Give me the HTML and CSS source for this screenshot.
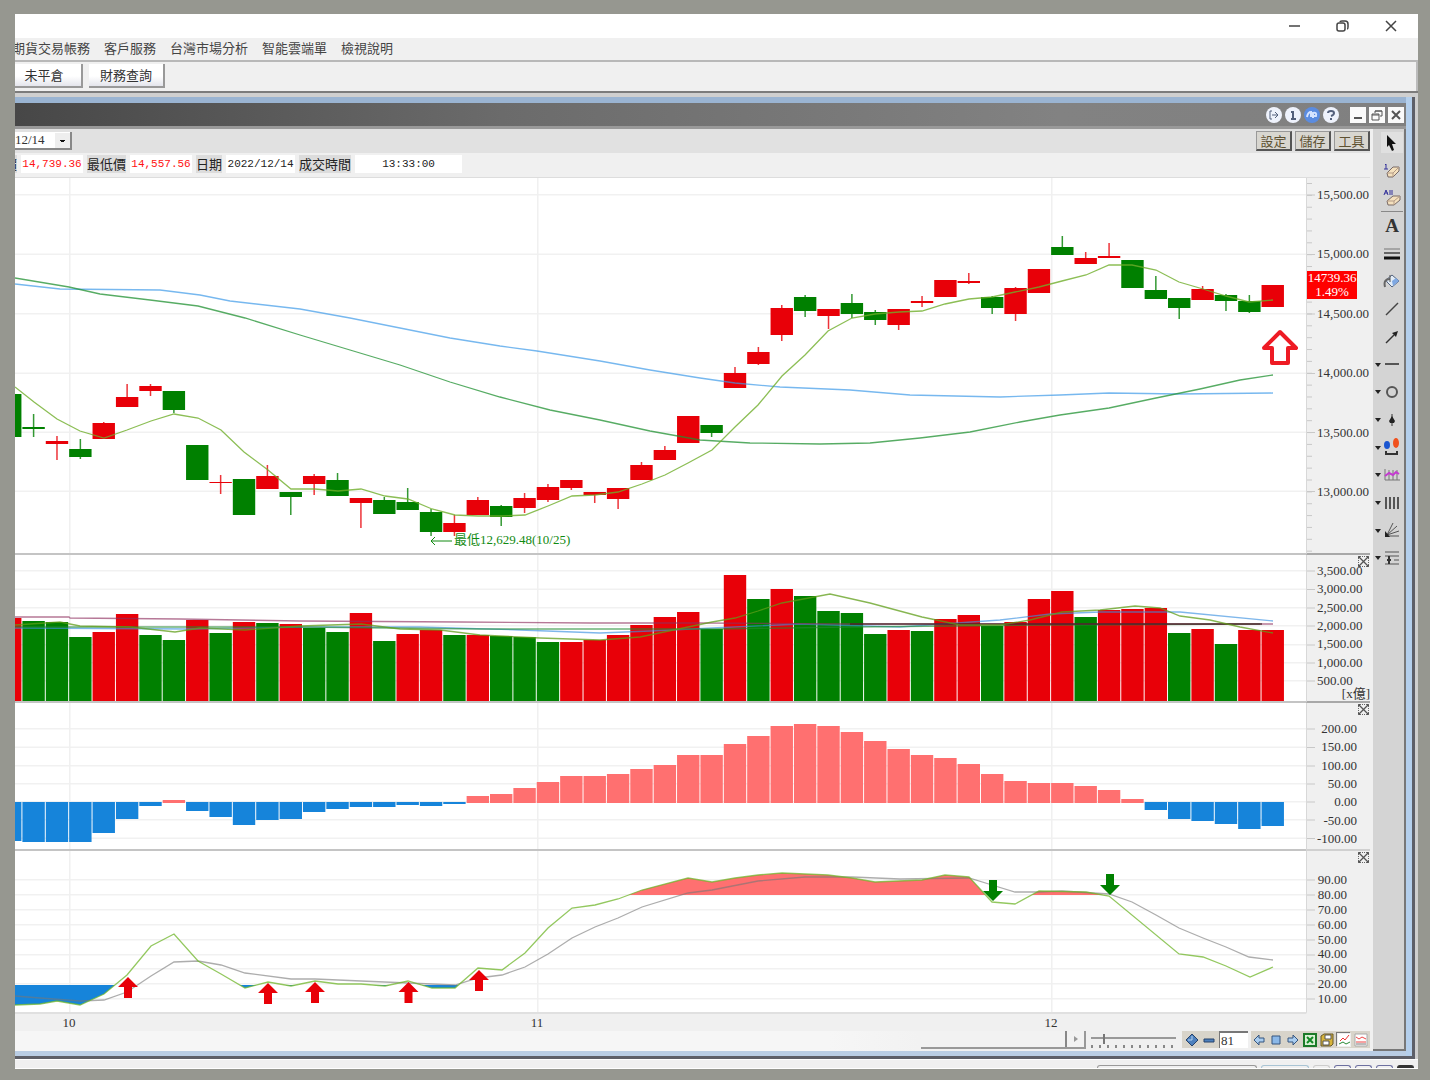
FILE: index.html
```html
<!DOCTYPE html>
<html lang="zh-Hant">
<head>
<meta charset="utf-8">
<title>技術分析</title>
<link rel="stylesheet" href="styles.css">
</head>
<body>
<main class="app">
  <header class="app-title">
    <button class="win-btn" aria-label="最小化"><svg width="14" height="14" viewBox="0 0 14 14"><path d="M1 7h11"/></svg></button>
    <button class="win-btn" aria-label="還原"><svg width="14" height="14" viewBox="0 0 14 14"><rect x="1" y="4" width="8" height="8" rx="2"/><path d="M4 3q0-1 2-1h3q3 0 3 3v3q0 2-1 2"/></svg></button>
    <button class="win-btn" aria-label="關閉"><svg width="14" height="14" viewBox="0 0 14 14"><path d="M2 2l10 10M12 2L2 12"/></svg></button>
  </header>
  <nav class="menu">
    <a href="#">期貨交易帳務</a><a href="#">客戶服務</a><a href="#">台灣市場分析</a><a href="#">智能雲端單</a><a href="#">檢視說明</a>
  </nav>
  <div class="toolbar">
    <button class="tool-btn">未平倉</button>
    <button class="tool-btn">財務查詢</button>
  </div>

  <div class="mdi">
    <section class="child">
      <header class="child-title">
        <button class="round" aria-label="登出"><svg width="12" height="12" viewBox="0 0 12 12"><path d="M4 2H2v8h2M4 6h6M7 3l3 3-3 3"/></svg></button>
        <button class="round" aria-label="資訊"><svg width="12" height="12" viewBox="0 0 12 12"><path d="M4 3h2v7M4 10h5" stroke-width="2"/></svg></button>
        <button class="round round-blue" aria-label="同步"><svg width="12" height="12" viewBox="0 0 12 12"><path d="M1 8q1-5 4-5v5M7 9V4q4-1 3 3H7" stroke-width="2"/></svg></button>
        <button class="round" aria-label="說明"><svg width="12" height="12" viewBox="0 0 12 12"><path d="M3 4q0-2 3-2t3 2-3 3M6 9v2" stroke-width="2"/></svg></button>
        <div class="frame-btns">
          <button class="frame-btn" aria-label="最小化"><svg width="12" height="12" viewBox="0 0 12 12"><path d="M2 9h8"/></svg></button>
          <button class="frame-btn" aria-label="還原"><svg width="12" height="12" viewBox="0 0 12 12"><path d="M4 4V2h7v5H9M4 2h7M1 5h7v6H1zM1 6h7" stroke-width="1"/></svg></button>
          <button class="frame-btn" aria-label="關閉"><svg width="12" height="12" viewBox="0 0 12 12"><path d="M2 2l8 8M10 2l-8 8"/></svg></button>
        </div>
      </header>

      <div class="work">
        <div class="content">
          <div class="options">
            <label class="combo" aria-label="日期"><select><option>12/14</option></select></label>
            <div class="options-right">
              <button class="opt-btn">設定</button>
              <button class="opt-btn">儲存</button>
              <button class="opt-btn">工具</button>
            </div>
          </div>
          <div class="quote">
            <span class="q-label">最高價</span><span class="q-val q-red">14,739.36</span>
            <span class="q-label">最低價</span><span class="q-val q-red">14,557.56</span>
            <span class="q-label">日期</span><span class="q-val q-date">2022/12/14</span>
            <span class="q-label">成交時間</span><span class="q-val q-time">13:33:00</span>
          </div>

          <div class="panel panel-price">
            <div class="plot"><svg id="price" viewBox="15 178 1291 375" preserveAspectRatio="none"></svg><span class="low-note">最低12,629.48(10/25)</span></div>
            <div class="axis">
              <svg class="ticks" data-y="195,254.5,314,373.5,432.5,491.5" viewBox="0 178 64 375"></svg>
              <span>15,500.00</span><span>15,000.00</span><span>14,500.00</span><span>14,000.00</span><span>13,500.00</span><span>13,000.00</span>
              <div class="tag">14739.36<br>1.49%</div>
            </div>
          </div>
          <div class="panel panel-volume">
            <div class="plot"><svg id="volume" viewBox="15 555 1291 146" preserveAspectRatio="none"></svg></div>
            <div class="axis">
              <svg class="ticks" data-y="571,589.5,608,626,645,663,681" viewBox="0 555 64 146"></svg>
              <span>3,500.00</span><span>3,000.00</span><span>2,500.00</span><span>2,000.00</span><span>1,500.00</span><span>1,000.00</span><span>500.00</span>
              <button class="shut" aria-label="關閉成交量"></button><span class="unit">[x億]</span>
            </div>
          </div>
          <div class="panel panel-macd">
            <div class="plot"><svg id="macd" viewBox="15 703 1291 146" preserveAspectRatio="none"></svg></div>
            <div class="axis">
              <svg class="ticks" data-y="729,747.5,766,784,802,820,838.5" viewBox="0 703 64 146"></svg>
              <span>200.00</span><span>150.00</span><span>100.00</span><span>50.00</span><span>0.00</span><span>-50.00</span><span>-100.00</span>
              <button class="shut" aria-label="關閉 MACD"></button>
            </div>
          </div>
          <div class="panel panel-kd">
            <div class="plot"><svg id="kd" viewBox="15 851 1291 161" preserveAspectRatio="none"></svg></div>
            <div class="axis">
              <svg class="ticks" data-y="880,895,910,925,940,955,969,984,999" viewBox="0 851 64 161"></svg>
              <span>90.00</span><span>80.00</span><span>70.00</span><span>60.00</span><span>50.00</span><span>40.00</span><span>30.00</span><span>20.00</span><span>10.00</span>
              <button class="shut" aria-label="關閉 KD"></button>
            </div>
          </div>
          <div class="months" id="months"></div>

          <div class="bottom">
            <div class="scroll"><div class="scroll-thumb"></div><button class="scroll-next" aria-label="向右捲動"><svg width="8" height="10" viewBox="0 0 8 10"><path d="M2 2v6l4-3z" fill="#999"/></svg></button></div>
            <label class="zoomer" aria-label="縮放"><input type="range" min="0" max="100" value="14"></label>
            <div class="pager">
              <button class="ico" aria-label="放大"><svg width="14" height="14" viewBox="0 0 14 14"><path d="M7 1l6 6-6 6-6-6z" fill="#4d80bd" stroke="#27436b"/><path d="M7 3v4H3" fill="none" stroke="#b5d4f2"/></svg></button>
              <button class="ico" aria-label="縮小"><svg width="14" height="14" viewBox="0 0 14 14"><path d="M2 6h10v3H2z" fill="#4d80bd" stroke="#27436b"/></svg></button>
              <input class="count" value="81" aria-label="根數">
            </div>
            <div class="pager pager-wide">
              <button class="ico" aria-label="前一筆"><svg width="14" height="14" viewBox="0 0 14 14"><path d="M7 2v3h5v4H7v3L2 7z" fill="#a9cdf0" stroke="#34557f"/></svg></button>
              <button class="ico" aria-label="停止"><svg width="14" height="14" viewBox="0 0 14 14"><path d="M3 3h8v8H3z" fill="#8bb8e8" stroke="#34557f"/></svg></button>
              <button class="ico" aria-label="後一筆"><svg width="14" height="14" viewBox="0 0 14 14"><path d="M7 2v3H2v4h5v3l5-5z" fill="#a9cdf0" stroke="#34557f"/></svg></button>
              <button class="ico" aria-label="匯出"><svg width="14" height="14" viewBox="0 0 14 14"><path d="M1 1h12v12H1z" fill="#d9f0d4" stroke="#1b7a28" stroke-width="2"/><path d="M4 4l6 6M10 4l-6 6" stroke="#138a25" stroke-width="2"/></svg></button>
              <button class="ico" aria-label="儲存圖形"><svg width="14" height="14" viewBox="0 0 14 14"><path d="M1 3l3-2h9v10l-2 2H1z" fill="#d7b43a" stroke="#665828"/><path d="M5 2h6v4H5zM3 8h6v4H3z" fill="#fff" stroke="#555"/></svg></button>
              <button class="ico ico-on" aria-label="走勢圖"><svg width="14" height="14" viewBox="0 0 14 14"><path d="M1 1h12v12H1z" fill="#fff"/><path d="M3 8l3-3 2 2 4-5" fill="none" stroke="#e33"/><path d="M2 11l4-2 3 2 4-2" fill="none" stroke="#298a35"/></svg></button>
              <button class="ico" aria-label="疊圖"><svg width="14" height="14" viewBox="0 0 14 14"><path d="M1 1h12v12H1z" fill="#fff" stroke="#aaa"/><path d="M2 4l3 2 3-2 4 2M2 9h10" fill="none" stroke="#e44"/><path d="M2 11h10" stroke="#777"/></svg></button>
            </div>
          </div>
        </div>

        <aside class="tools">
          <button class="tool tool-on" aria-label="選取"><svg width="16" height="18" viewBox="0 0 16 18"><path d="M3 1l9 9H8l2 6-2 1-3-6-2 2z" fill="#111"/></svg></button>
          <button class="tool" aria-label="清除一個"><svg width="18" height="18" viewBox="0 0 18 18"><path d="M3 2v5M2 3l1-1M1 7h4" stroke="#33309a"/><path d="M4 11l6-6h6v4l-6 6H5z" fill="#f4e0bd" stroke="#786a66"/><path d="M4 11h6l6-6M10 11v4" fill="none" stroke="#b39a86"/></svg></button>
          <button class="tool tool-rule" aria-label="全部清除"><svg width="18" height="18" viewBox="0 0 18 18"><path d="M1 6l2-5 2 5M2 4h3M7 1v5M9 1v5" fill="none" stroke="#33309a"/><path d="M4 12l6-5h7v4l-6 5H5z" fill="#f4e0bd" stroke="#786a66"/><path d="M4 12h7l6-5M11 12v4" fill="none" stroke="#b39a86"/></svg></button>
          <button class="tool tool-text" aria-label="文字">A</button>
          <button class="tool" aria-label="線寬"><svg width="16" height="14" viewBox="0 0 16 14"><path d="M0 2h16" stroke="#777"/><path d="M0 6h16" stroke="#666" stroke-width="2"/><path d="M0 11h16" stroke="#111" stroke-width="3"/></svg></button>
          <button class="tool" aria-label="填色"><svg width="18" height="16" viewBox="0 0 18 16"><path d="M3 7l6-5 7 6-7 6-5-5z" fill="#e1ecf7" stroke="#53637e"/><path d="M2 14q-2-8 5-8" fill="none" stroke="#666" stroke-width="2"/><path d="M9 8l4-3 3 3-6 5z" fill="#7fa8e2"/><path d="M7 2v7" stroke="#555"/></svg></button>
          <button class="tool" aria-label="直線"><svg width="14" height="14" viewBox="0 0 14 14"><path d="M1 13L13 1" stroke="#444" stroke-width="1.4"/></svg></button>
          <button class="tool" aria-label="箭頭"><svg width="14" height="14" viewBox="0 0 14 14"><path d="M1 13l8-8" stroke="#333" stroke-width="1.4"/><path d="M13 1l-2 6-4-4z" fill="#222"/></svg></button>
          <button class="tool more" aria-label="水平線"><svg width="16" height="14" viewBox="0 0 16 14"><path d="M1 7h14" stroke="#555" stroke-width="2"/></svg></button>
          <button class="tool more" aria-label="圓形"><svg width="14" height="14" viewBox="0 0 14 14"><circle cx="7" cy="7" r="5" fill="none" stroke="#555" stroke-width="2"/></svg></button>
          <button class="tool more" aria-label="標記"><svg width="14" height="14" viewBox="0 0 14 14"><path d="M7 1v12" stroke="#333"/><path d="M4 8l3-5 3 5-1 2H5z" fill="#222"/></svg></button>
          <button class="tool more" aria-label="多空"><svg width="16" height="18" viewBox="0 0 16 18"><ellipse cx="3" cy="7" rx="3" ry="4" fill="#1a55d0"/><ellipse cx="12" cy="5" rx="3" ry="5" fill="#f0501c"/><path d="M2 13v3h11v-3" fill="none" stroke="#333" stroke-width="2"/></svg></button>
          <button class="tool more" aria-label="指標"><svg width="16" height="14" viewBox="0 0 16 14"><path d="M1 1v11h15M5 2v10M9 2v10M13 2v10" fill="none" stroke="#777"/><path d="M1 8l4-3 4 2 3-3 3 2" fill="none" stroke="#c43bd0" stroke-width="2"/></svg></button>
          <button class="tool more" aria-label="週期線"><svg width="14" height="14" viewBox="0 0 14 14"><path d="M1 1v12M5 1v12M9 1v12M13 1v12" stroke="#555" stroke-width="2"/></svg></button>
          <button class="tool more" aria-label="扇形線"><svg width="16" height="16" viewBox="0 0 16 16"><path d="M1 14h14M3 13L15 9M3 13L13 4M3 13L9 1" stroke="#555"/><path d="M1 15V9l5 6z" fill="#222"/></svg></button>
          <button class="tool more" aria-label="黃金分割"><svg width="16" height="16" viewBox="0 0 16 16"><path d="M1 2h14M1 6h14M10 10h5M1 14h14" stroke="#555"/><path d="M5 6v8M3 10h4" stroke="#333" stroke-width="2"/></svg></button>
        </aside>
      </div>
    </section>
  </div>
  <footer class="status"><i class="st-wide"></i><i class="st-blue"></i><i class="st-pale"></i><i></i><i></i><i></i><i class="st-dark"></i></footer>
</main>
<script src="charts.js"></script>
</body>
</html>
```

FILE: styles.css
```css
* { box-sizing: border-box; }
body {
  margin: 0;
  min-height: 100vh;
  padding: 14px 12px 11px 15px;
  background: #969790;
  display: flex;
  flex-direction: column;
  font: 13px/14px "Liberation Serif", "Noto Sans CJK TC", serif;
  color: #333;
}
button { font: inherit; color: inherit; margin: 0; padding: 0; border: 0; background: none; }
svg { display: block; fill: none; }

.app { flex: 1; display: flex; flex-direction: column; background: #f0f0f0; overflow: hidden; }
.app-title { height: 24px; background: #fff; display: flex; justify-content: flex-end; padding-right: 3px; }
.win-btn { width: 48px; display: grid; place-items: center; }
.win-btn svg { stroke: #444; stroke-width: 1.5; }
.menu { height: 22px; padding-bottom: 2px; display: flex; align-items: center; gap: 14px; margin-left: -3px; font-family: "Noto Sans CJK TC", sans-serif; }
.menu a { color: #444; text-decoration: none; white-space: nowrap; }
.toolbar { height: 31px; border-top: 2px solid #b8b8b8; border-right: 2px solid #bbb; padding: 2px 0 3px; margin-left: -8px; display: flex; gap: 6px; }
.tool-btn { width: 76px; background: linear-gradient(#fff 55%, #e4e5ec); border-right: 2px solid #999; border-bottom: 2px solid #999; font-family: "Noto Sans CJK TC", sans-serif; }

.mdi { border-top: 2px solid #7c7c7c; background: #cfcfcf; padding: 4px 3px 0 0; }
.child { border-right: 3px solid #5d5f68; border-bottom: 3px solid #5d5f68; background: #b4cfec; padding-right: 6px; }
.child-title { height: 32px; border-top: 6px solid #9ab4d2; border-bottom: 3px solid #999; background: linear-gradient(90deg, #474747, #6b6b6b 35%, #828282 75%, #808080); display: flex; align-items: center; justify-content: flex-end; gap: 3px; padding-right: 2px; }
.round { width: 16px; height: 16px; border-radius: 50%; background: #eef2fc; display: grid; place-items: center; }
.round svg { stroke: #53607c; }
.round-blue { background: #5b8ce0; }
.round-blue svg { stroke: #d6e4ff; }
.frame-btns { display: flex; gap: 3px; margin-left: 8px; }
.frame-btn { width: 16px; height: 16px; background: #fafafa; display: grid; place-items: center; }
.frame-btn svg { stroke: #555; stroke-width: 2; }

.work { display: flex; border-bottom: 5px solid #b9cde4; }
.content { flex: 1; min-width: 0; padding-right: 3px; background: #f0f0f0; }
.options { height: 24px; background: #e1e1e1; display: flex; justify-content: space-between; align-items: center; }
.combo { position: relative; width: 57px; height: 18px; border-right: 2px solid #888; border-bottom: 2px solid #888; background: #fff; }
.combo select { appearance: none; width: 100%; height: 16px; border: 0; padding: 0; background: #fff; font: inherit; color: inherit; display: block; }
.combo::after { content: ""; position: absolute; right: 0; top: 1px; width: 15px; height: 15px; background: linear-gradient(#111, #111) 5px 7px / 5px 1px no-repeat, linear-gradient(#111, #111) 6px 8px / 3px 1px no-repeat, #eee; pointer-events: none; }
.options-right { display: flex; gap: 3px; }
.opt-btn { width: 36px; height: 20px; border: 1px solid #999; border-right: 2px solid #555; border-bottom: 2px solid #555; background: #d8d6d0; color: #5e5233; font-family: "Noto Sans CJK TC", sans-serif; }
.quote { height: 25px; padding-bottom: 2px; border-bottom: 1px solid #ddd; display: flex; align-items: center; gap: 4px; margin-left: -37px; white-space: nowrap; color: #222; }
.q-label { background: #dcdcdc; font: 13px/18px "Noto Sans CJK TC", sans-serif; flex: none; }
.q-val { width: 62px; background: #fff; text-align: center; font: 11px/18px "Liberation Mono", monospace; flex: none; }
.q-red { color: #f11; }
.q-date { width: 69px; }
.q-time { width: 107px; }

.panel { display: grid; grid-template-columns: minmax(0, 1fr) 64px; }
.plot { position: relative; background: #fff; border-bottom: 2px solid #c4c4c4; }
.plot svg { width: 100%; height: 100%; }
.panel-price { height: 377px; }
.panel-volume { height: 148px; }
.panel-macd { height: 148px; }
.panel-kd { height: 163px; }
.axis { position: relative; border-left: 1px solid #d8d8d8; border-bottom: 2px solid #a8a8a8; display: flex; flex-direction: column; justify-content: space-between; padding: 10px 0 54px 10px; }
.panel-volume .axis { padding-top: 9px; padding-bottom: 13px; }
.panel-macd .axis { padding: 19px 13px 3px 0; text-align: right; border-bottom-color: #d0d0d0; }
.panel-kd .axis { padding: 22px 23px 6px 0; text-align: right; border-bottom-color: #f0f0f0; }
.panel-kd .plot { border-bottom-color: #e0e0e0; }
.ticks { position: absolute; left: 0; top: 0; width: 64px; height: 100%; stroke: #c8c8c8; }
.axis > span { position: relative; }
.axis .unit { position: absolute; right: 0; bottom: 0; }
.shut { position: absolute; right: 1px; top: 1px; width: 11px; height: 11px; border: 1px dotted #666;
  background: linear-gradient(45deg, transparent 44%, #555 45% 55%, transparent 56%), linear-gradient(-45deg, transparent 44%, #555 45% 55%, transparent 56%); }
.tag { position: absolute; left: 0; top: 93px; width: 50px; height: 28px; background: #f00; color: #fff; text-align: center; }
.low-note { position: absolute; left: 34%; top: 355px; color: #118a11; white-space: nowrap; }

.months { position: relative; height: 17px; margin-right: 64px; }
.months span { position: absolute; top: 2px; width: 20px; margin-left: -10px; text-align: center; }
.bottom { height: 20px; display: flex; align-items: stretch; justify-content: flex-end; background: linear-gradient(90deg, #f6f6f6 60%, #f0f0f0 70%); }
.scroll { width: 165px; height: 18px; display: flex; border-bottom: 2px solid #999; background: #f2f2f2; }
.scroll-thumb { flex: 1; border-right: 2px solid #888; }
.scroll-next { width: 19px; display: grid; place-items: center; border-right: 2px solid #999; }
.zoomer { width: 85px; margin: 0 6px 0 5px; padding-top: 3px; background: repeating-linear-gradient(90deg, #888 0 2px, transparent 2px 8px) 0 14px / 100% 3px no-repeat; }
.zoomer input { appearance: none; display: block; width: 100%; height: 10px; margin: 0; background: linear-gradient(#999, #999) 0 3px / 100% 2px no-repeat; }
.zoomer input::-webkit-slider-thumb { appearance: none; width: 2px; height: 10px; background: #777; }
.pager { height: 17px; background: #d8d4ca; display: flex; align-items: center; gap: 3px; padding-left: 3px; }
.pager-wide { margin-left: 3px; padding: 0 2px 0 1px; }
.ico-on { background: #eee; box-shadow: -1px -1px #777; }
.count { width: 29px; height: 17px; padding: 0 1px; border: 0; border-top: 2px solid #777; border-left: 1px solid #777; background: #fff; font: inherit; color: #333; }

.tools { width: 33px; background: #d4d4d4; border-right: 2px solid #777; border-bottom: 2px solid #777; display: grid; grid-template-rows: repeat(16, 1fr); padding-bottom: 477px; }
.tool { position: relative; display: grid; place-items: center; width: 22px; margin-left: 8px; }
.tool-on { background: #e0e0e0; height: 21px; align-self: center; }
.tool-rule { border-bottom: 1px solid #888; }
.tool-text { font: bold 19px/20px "Liberation Serif", serif; }
.more::before { content: ""; position: absolute; left: -6px; top: 12px; border: 3px solid transparent; border-top: 4px solid #222; border-bottom: 0; }

.status { flex: 1; min-height: 9px; border-top: 1px solid #fff; border-bottom: 1px solid #fff; display: flex; justify-content: flex-end; align-items: flex-end; gap: 4px; padding-right: 4px; }
.status i { width: 17px; height: 3px; border: 1px solid #6d70a0; border-bottom: 0; border-radius: 3px 3px 0 0; }
.status .st-wide { width: 160px; border-color: #999; }
.status .st-blue { width: 48px; border-color: #a9c4d4; }
.status .st-pale { border-color: #ccc; }
.status .st-dark { background: #333; border-color: #333; }
```

FILE: charts.js
```js
const START = 33.6, STEP = 23.38, BODY = 22.4;
const RED = '#e80008', GREEN = '#008000', PINK = '#ff7070', BLUE = '#1684da';
const cx = i => START + STEP * i;
const rect = (x, y, w, h, fill) => `<rect x="${x}" y="${y}" width="${w}" height="${h}" fill="${fill}"/>`;
const line = (d, stroke, opacity = 1, w = 1.3) => `<polyline points="${d}" stroke="${stroke}" stroke-opacity="${opacity}" stroke-width="${w}" fill="none"/>`;

const months = [[69, '10'], [537, '11'], [1051, '12']];

function grid(ys, top, bottom) {
  return ys.map(y => rect(15, y - 1, 1291, 1.5, '#f1f1f1')).join('') +
    months.map(m => rect(m[0], top, 1.5, bottom - top, '#f0f0f0')).join('');
}

// colour, body top, body bottom, high, low; the first entry is cut by the left edge
const candles = `g 394 437 394 437|g 427 429 414 437|r 441 444 436 460|g 449 457 439 459|r 423 439 422 439|r 397 407 384 407|r 386 391 384 396|g 391 410 391 413|g 445 480 445 480|r 482 483 475 494|g 479 515 479 515|r 476 489 465 489|g 492 497 492 515|r 476 484 474 495|g 480 496 473 496|r 498 503 498 528|g 500 514 497 514|g 502 510 488 510|g 512 532 509 536|r 523 532 515 536|r 500 515 497 515|g 506 517 505 526|r 498 508 493 513|r 487 500 484 502|r 480 488 480 490|r 492 495 492 503|r 488 499 488 509|r 465 480 462 480|r 450 460 446 460|r 416 443 416 443|g 425 433 425 437|r 373 388 367 388|r 352 364 347 365|r 308 335 305 341|g 297 311 295 317|r 309 316 309 329|g 303 314 294 318|g 312 320 310 325|r 309 325 309 330|r 301 303 296 307|r 280 297 280 297|r 281 283 273 284|g 297 308 296 314|r 288 314 287 321|r 269 293 269 293|g 247 255 236 255|r 258 264 252 264|r 256 258 243 258|g 260 288 260 288|g 290 299 276 299|g 298 308 298 319|r 289 300 286 300|g 295 301 294 311|g 301 312 295 313|r 285 307 285 307`;
const arrow = (x, y, dir, fill) => `<path d="M${x} ${y}l10 ${dir * 10}h-6v${dir * 11}h-8v${dir * -11}h-6z" fill="${fill}"/>`;

document.getElementById('price').innerHTML = grid([195, 254.5, 314, 373.5, 432.5, 491.5], 178, 553) +
  candles.split('|').map((row, k) => {
    const [c, t, b, hi, lo] = row.split(' ');
    const x = cx(k - 1), fill = c === 'r' ? RED : GREEN;
    return `<g opacity=".8">${rect(x - 0.75, hi, 1.5, lo - hi, fill)}</g>` + rect(x - BODY / 2, t, BODY, b - t, fill);
  }).join('') +
  line('15,284 60,289 160,290 200,295 230,301 300,309 350,318 400,328 450,338 500,346 537,351 600,361 650,370 700,378 735,383 780,387 850,390 910,395 1000,397 1060,395 1109,393 1180,394 1273,393', '#3d9ae8', .7) +
  line('15,278 69,287 100,294 150,300 198,306 245,318 300,335 350,350 400,365 450,382 500,397 550,410 600,420 650,431 700,440 750,443 820,444 870,443 920,438 970,432 1020,422 1060,415 1109,408 1156,398 1200,389 1240,380 1273,375', '#1f9030', .75) +
  line('15,387 34,402 57,419 80,431 104,438 127,430 151,421 174,414 198,418 221,430 244,452 268,470 291,489 315,489 338,491 361,489 385,496 408,499 432,509 455,515 478,516 502,516 525,515 548,506 572,496 595,495 618,492 642,484 665,475 688,463 712,450 735,427 758,405 782,376 805,355 828,331 852,318 875,314 899,312 922,311 945,304 969,299 992,297 1015,292 1039,287 1062,281 1086,275 1109,265 1132,265 1156,270 1179,282 1203,289 1226,296 1249,302 1273,300', '#6fae2a', .8) +
  '<path d="M431 541h21M431 541l4-4M431 541l4 4" stroke="#118a11" fill="none"/>' +
  '<path d="M1280 332l16 16h-8v15h-16v-15h-8z" fill="#fff" stroke="#ee1b24" stroke-width="4" stroke-linejoin="round"/>';

const volume = `r618 g621 g622 g637 r632 r614 g635 g640 r620 g633 r622 g623 r624 g628 g632 r613 g641 r634 r630 g635 r635 g636 g637 g642 r642 r640 r635 r625 r617 r612 g629 r575 g599 r589 g596 g611 g613 g634 r630 g631 r619 r615 g626 r622 r599 r591 g617 r610 r609 r608 g633 r629 g644 r630 r630`;
document.getElementById('volume').innerHTML = grid([571, 589.5, 608, 626, 645, 663, 681], 555, 701) +
  volume.split(' ').map((v, k) => rect(cx(k - 1) - BODY / 2, v.slice(1), BODY, 701 - v.slice(1), v[0] === 'r' ? RED : GREEN)).join('') +
  line('15,628 190,629 310,627 420,627 520,630 600,633 650,631 712,628 800,624 900,627 1000,620 1050,614 1100,612 1180,612 1273,621', '#3b91e0', .65) +
  line('15,627 300,627 480,629 712,629 850,627 950,626 1050,625 1260,624', '#208b2f', .65) +
  line('15,617 69,617 70,618 180,619 300,621 460,622 590,623 700,623 850,624 1273,624', '#8f3060', .65) +
  line('850,624 1262,624', '#402020', .8) +
  line('15,625 60,622 80,626 130,627 175,632 200,628 245,630 300,626 361,624 400,629 440,630 480,635 540,638 600,640 640,637 712,622 735,618 758,611 782,603 830,594 870,603 922,617 960,625 1000,625 1030,620 1062,612 1100,610 1135,606 1160,608 1180,616 1210,620 1240,627 1273,633', '#5f9d18', .75);

const macd = [841, 842, 842, 842, 833, 819, 806, 800, 811, 817, 825, 820, 819, 812, 809, 807, 807, 805, 806, 804, 796, 794, 788, 782, 776, 776, 774, 769, 765, 755, 755, 744, 736, 726, 724, 726, 732, 741, 749, 755, 758, 764, 774, 781, 783, 783, 786, 790, 799, 810, 819, 821, 824, 829, 826];
document.getElementById('macd').innerHTML = grid([729, 747.5, 766, 784, 802, 820, 838.5], 703, 849) +
  macd.map((y, k) => y < 802 ? rect(cx(k - 1) - BODY / 2, y, BODY, 803 - y, PINK) : rect(cx(k - 1) - BODY / 2, 802, BODY, y - 802, BLUE)).join('');

const k = '15,1005 40,1004 57,1001 80,1005 104,994 127,975 151,946 174,934 198,961 221,974 245,988 268,982 291,986 315,981 338,984 361,984 385,986 408,981 432,988 455,988 478,968 502,970 525,953 548,928 572,908 595,905 618,899 642,890 688,878 712,882 735,878 758,875 782,873 828,875 852,878 875,882 922,880 945,875 969,877 992,902 1015,904 1039,891 1086,892 1109,896 1179,954 1203,957 1226,966 1250,977 1273,967';
const d = '15,996 40,998 80,1001 104,1000 127,992 151,976 174,962 198,961 221,965 245,973 291,979 315,979 361,981 408,983 455,985 478,978 502,975 525,967 548,954 572,938 595,927 618,918 642,907 688,893 712,890 758,881 805,877 852,877 900,879 969,878 992,885 1015,892 1039,892 1062,891 1109,894 1132,902 1156,915 1179,928 1203,938 1226,947 1249,957 1273,960';
document.getElementById('kd').innerHTML = grid([880, 895, 910, 925, 940, 955, 969, 984, 999], 851, 1012) +
  `<clipPath id="over"><rect x="15" y="851" width="1291" height="44"/></clipPath>
   <clipPath id="under"><rect x="15" y="985" width="1291" height="27"/></clipPath>
   <polygon points="15,895 ${k} 1273,895" fill="${PINK}" clip-path="url(#over)"/>
   <polygon points="15,985 ${k} 1273,985" fill="${BLUE}" clip-path="url(#under)"/>` +
  line(d, '#777', .6) + line(k, '#6fb52a', .75) +
  [[128, 977], [268, 983], [315, 982], [408.5, 982], [479, 970]].map(p => arrow(p[0], p[1], 1, RED)).join('') +
  [[993, 901], [1110, 895]].map(p => arrow(p[0], p[1], -1, GREEN)).join('');

document.getElementById('months').innerHTML = months.map(m => `<span style="left:${(m[0] - 15) / 12.91}%">${m[1]}</span>`).join('');

document.querySelectorAll('.ticks').forEach(svg => {
  const ys = svg.dataset.y.split(',').map(Number);
  let out = ys.map(y => `<path d="M0 ${y}h8"/>`).join('');
  if (svg.closest('.panel-price')) {
    for (let y = 183.5; y < 552; y += 11.86) out += `<path d="M0 ${y}h5"/>`;
  }
  svg.innerHTML = out;
});
```
